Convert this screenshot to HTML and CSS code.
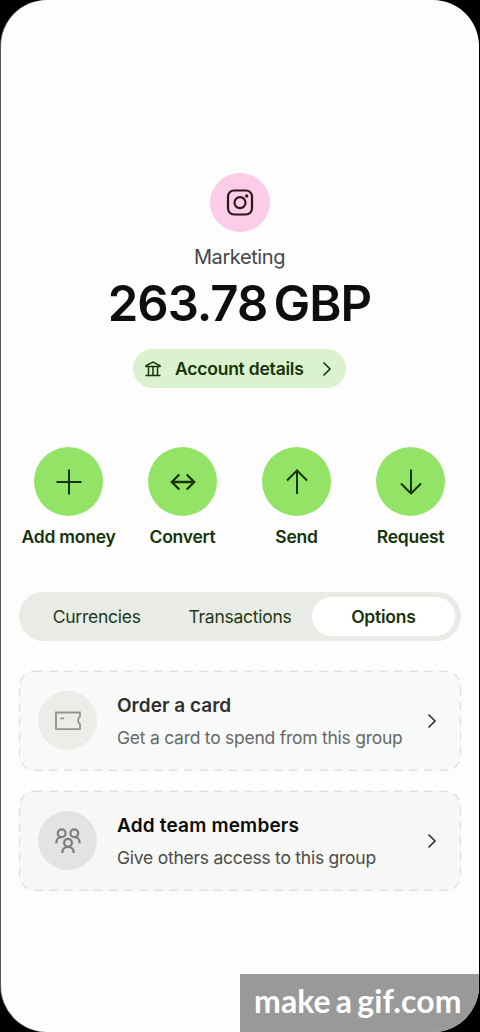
FILE: index.html
```html
<!DOCTYPE html>
<html lang="en">
<head>
<meta charset="utf-8">
<title>Marketing account</title>
<link rel="stylesheet" href="styles.css">
</head>
<body>
<main class="screen">
  <header class="account">
    <div class="avatar">
      <svg width="28" height="28" viewBox="0 0 28 28" fill="none" stroke="#30151a" stroke-width="2.200"><rect x="2" y="1.500" width="24" height="24" rx="6"/><circle cx="14" cy="13.700" r="5.500"/><circle cx="20.700" cy="7" r="1.700" fill="#30151a" stroke="none"/></svg>
    </div>
    <p class="name">Marketing</p>
    <h1 class="balance">263.78 GBP</h1>
    <button class="details">
      <svg width="16" height="16" viewBox="0 0 16 16" fill="none" stroke="#17330a" stroke-width="1.500"><path d="M1 5.500V4.600L8 1l7 3.600v.9zM3.500 6v8M8 6v8M12.500 6v8M.5 14.500h15"/></svg>
      <span class="details-text">Account details</span>
      <svg class="details-arrow" width="10" height="16" viewBox="0 0 10 16" fill="none" stroke="#17330a" stroke-width="1.600"><path d="M1.500 1.500 8 8l-6.500 6.500"/></svg>
    </button>
  </header>

  <nav class="actions">
    <div class="action"><span class="disc"><svg class="glyph" viewBox="0 0 28 28"><path d="M14 1.500v25M1.500 14h25"/></svg></span><span class="label">Add money</span></div>
    <div class="action"><span class="disc"><svg class="glyph bold" viewBox="0 0 28 28"><path d="M2.500 14h23M10.300 6.500 2.800 14l7.500 7.500M17.700 6.500l7.500 7.500-7.500 7.500"/></svg></span><span class="label">Convert</span></div>
    <div class="action"><span class="disc"><svg class="glyph" viewBox="0 0 28 28"><path d="M14 26V2.500M4 12.500l10-10 10 10"/></svg></span><span class="label">Send</span></div>
    <div class="action"><span class="disc"><svg class="glyph" viewBox="0 0 28 28"><path d="M14 1.500v24M4 15.500l10 10 10-10"/></svg></span><span class="label">Request</span></div>
  </nav>

  <div class="tabs">
    <span class="tab">Currencies</span>
    <span class="tab">Transactions</span>
    <span class="tab active">Options</span>
  </div>

  <section class="cards">
    <article class="card order">
      <svg class="outline" viewBox="0 0 442 100"><rect x=".5" y=".3" width="441" height="99" rx="15"/></svg>
      <span class="badge"><svg width="28" height="28" viewBox="0 0 28 28" fill="none" stroke="#92958f" stroke-width="1.800"><path d="M2 5.500h24v3.700c-2.400 1.400-2.400 6.600 0 8v5H2zM6.200 11.300h4"/></svg></span>
      <div class="copy"><h2 class="title">Order a card</h2><p class="sub">Get a card to spend from this group</p></div>
      <svg class="chevron" viewBox="0 0 10 16"><path d="M1.500 1.500 8 8l-6.500 6.500"/></svg>
    </article>
    <article class="card members">
      <svg class="outline" viewBox="0 0 442 100"><rect x=".5" y=".3" width="441" height="99" rx="15"/></svg>
      <span class="badge"><svg width="28" height="28" viewBox="0 0 28 28" fill="none" stroke="#7c7e7c" stroke-width="2.200"><circle cx="7.700" cy="6.200" r="3.900"/><circle cx="20.300" cy="6.200" r="3.900"/><circle cx="14" cy="15.800" r="3.900"/><path d="M2.400 16.300v-1.200c0-2.900 2.300-5 5-5M25.600 16.300v-1.200c0-2.900-2.300-5-5-5M8.400 26v-1c0-3.100 2.500-5.100 5.600-5.100s5.600 2 5.600 5.100v1"/></svg></span>
      <div class="copy"><h2 class="title">Add team members</h2><p class="sub">Give others access to this group</p></div>
      <svg class="chevron" viewBox="0 0 10 16"><path d="M1.500 1.500 8 8l-6.500 6.500"/></svg>
    </article>
  </section>
  <div class="watermark"><span>make</span><span>a</span><span>gif.com</span></div>
</main>
</body>
</html>
```
FILE: styles.css
```css
* { box-sizing: border-box; }
body { margin: 0; background: #000; font-family: Inter, "Liberation Sans", sans-serif; }
h1, h2, p { margin: 0; }
.screen {
  position: relative;
  width: 478px;
  height: 1032px;
  margin-left: 1px;
  padding: 173px 18px 0;
  border-radius: 46px;
  overflow: hidden;
  background: #fdfdfd;
  box-shadow: -1px 0 0 #555;
}
.account { display: flex; flex-direction: column; align-items: center; padding-right: 1px; }
.avatar {
  display: flex; align-items: center; justify-content: center;
  width: 60px; height: 59px;
  border-radius: 50%;
  background: #fbcde8;
}
.name { margin-top: 12px; font-size: 20px; line-height: 26px; letter-spacing: -0.4px; color: #454745; }
.balance { margin-top: 4px; font-size: 49px; line-height: 60px; font-weight: 600; letter-spacing: -1px; word-spacing: -5px; color: #0e0f0c; white-space: nowrap; }
.details {
  display: flex; align-items: center;
  width: 213px; height: 39px;
  margin-top: 15px; padding: 0 14px 0 12px;
  border: 0; border-radius: 20px;
  background: #daf3ce;
  color: #17330a;
  font: 600 17.500px/24px Inter, sans-serif;
}
.details-text { margin-left: 14px; letter-spacing: -0.22px; white-space: nowrap; }
.details-arrow { margin-left: auto; }
.actions { display: grid; grid-template-columns: repeat(4, 114px); justify-content: center; margin-top: 59px; padding-right: 1px; }
.action { display: flex; flex-direction: column; align-items: center; }
.disc { display: flex; align-items: center; justify-content: center; width: 69px; height: 69px; border-radius: 50%; background: #93e366; }
.glyph { width: 28px; height: 28px; fill: none; stroke: #17330a; stroke-width: 2; }
.bold { stroke-width: 2.300; }
.label { margin-top: 9px; font-size: 17.500px; line-height: 24px; font-weight: 600; letter-spacing: -0.25px; color: #17330a; white-space: nowrap; }
.tabs {
  display: grid; grid-template-columns: repeat(3, 1fr);
  height: 49px; margin-top: 43px; padding: 5px 6px 5px 6px;
  border-radius: 25px;
  background: #e9ebe6;
}
.tab { display: flex; align-items: center; justify-content: center; font-size: 17.500px; letter-spacing: -0.25px; color: #203a16; }
.active { border-radius: 20px; background: #fff; color: #17330a; font-weight: 600; }
.cards { display: grid; gap: 20px; margin-top: 30px; }
.card { position: relative; display: flex; align-items: center; height: 100px; padding: 0 24px 1px 19px; border-radius: 16px; }
.order { background: #f8faf9; }
.members { background: #f7f7f5; }
.outline { position: absolute; inset: 0; width: 100%; height: 100%; overflow: visible; fill: none; stroke: #e0e1df; stroke-width: 1.500; stroke-dasharray: 8 7; }
.badge { display: flex; align-items: center; justify-content: center; width: 59px; height: 59px; border-radius: 50%; background: #ebede9; }
.members .badge { background: #e3e4e2; }
.copy { margin: 1px 0 0 20px; white-space: nowrap; }
.title { font-size: 19px; line-height: 26px; font-weight: 600; letter-spacing: 0.02px; color: #30312f; }
.sub { margin-top: 7px; font-size: 17.500px; line-height: 24px; letter-spacing: -0.25px; color: #666865; }
.members .title { letter-spacing: 0.18px; color: #0b0c0a; }
.members .sub { color: #4b4d4a; }
.chevron { width: 10px; height: 16px; margin-left: auto; fill: none; stroke: #30312f; stroke-width: 1.600; }
.watermark {
  position: absolute; right: 0; bottom: 0;
  display: flex; align-items: center; gap: 5px;
  width: 239px; height: 58px; padding: 0 0 4px 14px;
  background: #999;
  color: #fff;
  font: 700 32px/40px Lato, sans-serif;
  letter-spacing: 0.1px;
}
```
